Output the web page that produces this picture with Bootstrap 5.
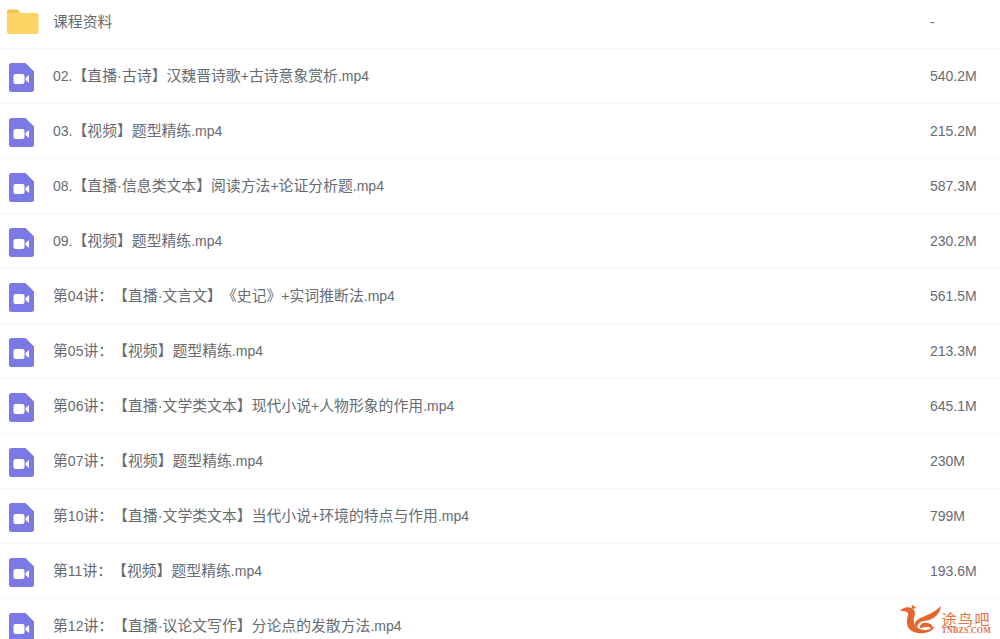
<!DOCTYPE html>
<html lang="zh">
<head>
  <meta charset="UTF-8" />
  <meta name="viewport" content="width=device-width, initial-scale=1" />
  <title>课程资料</title>
  <link href="https://cdn.jsdelivr.net/npm/bootstrap@5.3.0/dist/css/bootstrap.min.css" rel="stylesheet" />
  <style>
    html, body { height: 100%; overflow: hidden; }
    body {
      position: relative;
      background: #fff;
      color: #666b72;
      font-family: "Liberation Sans", "Noto Sans CJK SC", sans-serif;
      font-size: 14px;
      text-spacing-trim: space-all;
    }
    .file-row {
      height: 55px;
      padding-top: 1px;
      padding-right: 22px;
      border-bottom: 1px solid #f5f5f7;
    }
    .file-first { height: 49px; padding-top: 0; padding-bottom: 4px; }
    .file-ico { width: 53px; flex-shrink: 0; }
    .file-ico svg { display: block; margin-left: 9px; margin-top: 2px; }
    .file-first .file-ico svg { margin-left: 7px; margin-top: 0; }
    .file-name { font-size: 14.85px; }
    .file-lat { font-size: 14px; }
    .file-size { width: 48px; }
    .wm {
      position: absolute;
      right: 9px;
      bottom: 5px;
      color: #e4703f;
    }
    .wm-cn { font-size: 15px; line-height: 15px; letter-spacing: 1.500px; }
    .wm-en { font-size: 8px; line-height: 7px; font-weight: 700; font-family: "Liberation Serif", serif; letter-spacing: .2px; }
  </style>
</head>
<body>

  <div id="lista"></div>

  <!-- marca de agua -->
  <div class="wm d-flex align-items-end">
    <svg width="41" height="29" viewBox="0 0 41 29">
      <path fill="#e4662f" d="M0 6C3 2 9 1 13 4c3 3 2 6 1 9-1 5 1 9 6 11 5 2 10 1 15-3-3 6-10 8-17 7C10 27 6 22 7 15c0-3 2-5 1-7C6 6 4 6 0 6z"/>
      <path fill="#e4662f" d="M12 0c1 1 3 1 4 3l-3 1c-1-1-2-2-1-4z"/>
      <path fill="#e4662f" d="M15 20C14 12 30 12 41 1c-1 9-8 14-17 15-4 1-6 2-7 7z"/>
      <path fill="#e4662f" d="M20 23c-1-4 4-6 8-5 4 1 6 4 4 7-1-2-3-4-6-3-2 0-4 1-6 1z"/>
    </svg>
    <div>
      <div class="wm-cn">途鸟吧</div>
      <div class="wm-en">TNBZS.COM</div>
    </div>
  </div>

  <script>
    const archivos = [
      ["课程资料", "-"],
      ["02.【直播·古诗】汉魏晋诗歌+古诗意象赏析.mp4", "540.2M"],
      ["03.【视频】题型精练.mp4", "215.2M"],
      ["08.【直播·信息类文本】阅读方法+论证分析题.mp4", "587.3M"],
      ["09.【视频】题型精练.mp4", "230.2M"],
      ["第04讲：【直播·文言文】《史记》+实词推断法.mp4", "561.5M"],
      ["第05讲：【视频】题型精练.mp4", "213.3M"],
      ["第06讲：【直播·文学类文本】现代小说+人物形象的作用.mp4", "645.1M"],
      ["第07讲：【视频】题型精练.mp4", "230M"],
      ["第10讲：【直播·文学类文本】当代小说+环境的特点与作用.mp4", "799M"],
      ["第11讲：【视频】题型精练.mp4", "193.6M"],
      ["第12讲：【直播·议论文写作】分论点的发散方法.mp4", ""]
    ];

    const iconoCarpeta = `<svg width="32" height="26" viewBox="0 0 32 26">
      <path fill="#f5c04a" d="M0 2.500a2 2 0 0 1 2-2h8.500l3.500 4h-14z"/>
      <path fill="#fdd466" d="M0 4h29.500a2 2 0 0 1 2 2v17a2 2 0 0 1-2 2h-27.500a2 2 0 0 1-2-2z"/>
    </svg>`;

    const iconoVideo = `<svg width="25" height="29" viewBox="0 0 25 29">
      <path fill="#7b79e6" d="M2.500 0h14l8.500 8.500v18a2.500 2.500 0 0 1-2.500 2.500h-20a2.500 2.500 0 0 1-2.500-2.500v-24a2.500 2.500 0 0 1 2.500-2.500z"/>
      <rect fill="#fff" x="4.500" y="11" width="11" height="10" rx="2"/>
      <path fill="#fff" d="M16.500 15l3.500-3v8l-3.500-3z"/>
    </svg>`;

    // digitos y latin van un poco mas chicos que el chino
    const nombreHtml = n => n.replace(/[0-9A-Za-z.+]+/g, m => `<span class="file-lat">${m}</span>`);

    const lista = document.getElementById("lista");
    archivos.forEach((a, i) => {
      const row = `
        <div class="file-row d-flex align-items-center ${i === 0 ? "file-first" : ""}">
          <div class="file-ico">${i === 0 ? iconoCarpeta : iconoVideo}</div>
          <div class="file-name flex-grow-1">${nombreHtml(a[0])}</div>
          <div class="file-size">${a[1]}</div>
        </div>`;
      lista.insertAdjacentHTML("beforeend", row);
    });
  </script>
  <script src="https://cdn.jsdelivr.net/npm/bootstrap@5.3.0/dist/js/bootstrap.bundle.min.js"></script>
</body>
</html>
